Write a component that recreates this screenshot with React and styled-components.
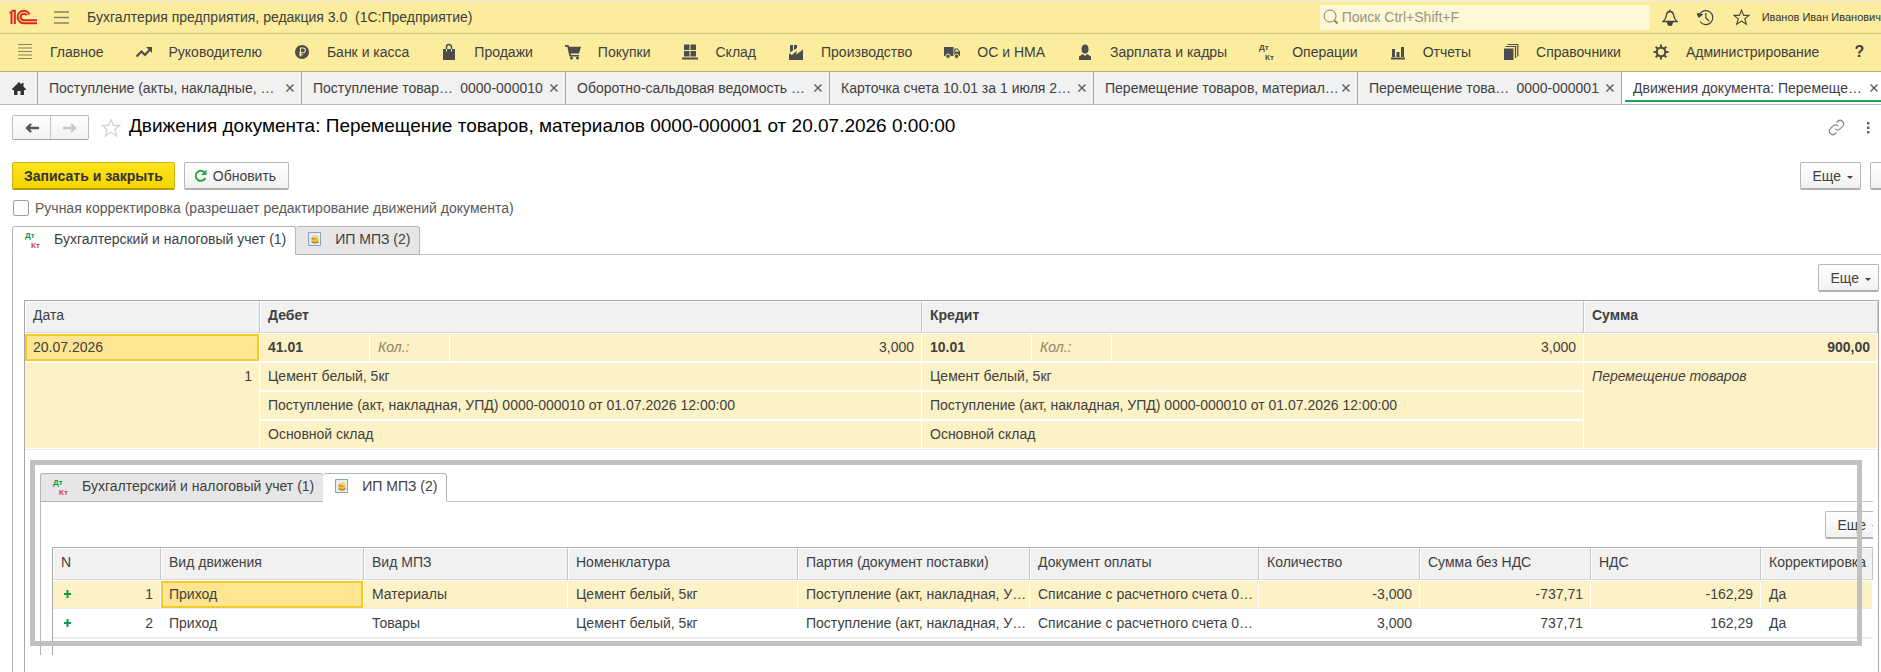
import React, { useState } from "react";
import styled, { createGlobalStyle, css } from "styled-components";

const INK = "#4d4d4d";

const sections = [
    { icon: "list", title: "Главное" },
    { icon: "trend", title: "Руководителю" },
    { icon: "ruble", title: "Банк и касса" },
    { icon: "bag", title: "Продажи" },
    { icon: "cart", title: "Покупки" },
    { icon: "store", title: "Склад" },
    { icon: "factory", title: "Производство" },
    { icon: "truck", title: "ОС и НМА" },
    { icon: "person", title: "Зарплата и кадры" },
    { icon: "dtkt", title: "Операции" },
    { icon: "bars", title: "Отчеты" },
    { icon: "books", title: "Справочники" },
    { icon: "gear", title: "Администрирование" },
];

const windows = [
    { title: "Поступление (акты, накладные, …" },
    { title: "Поступление товар…", number: "0000-000010" },
    { title: "Оборотно-сальдовая ведомость …" },
    { title: "Карточка счета 10.01 за 1 июля 2…" },
    { title: "Перемещение товаров, материал…" },
    { title: "Перемещение това…", number: "0000-000001" },
    { title: "Движения документа: Перемеще…", active: true },
];

const columns = [
    { title: "N", width: 108 },
    { title: "Вид движения", width: 203 },
    { title: "Вид МПЗ", width: 204 },
    { title: "Номенклатура", width: 230 },
    { title: "Партия (документ поставки)", width: 232 },
    { title: "Документ оплаты", width: 229 },
    { title: "Количество", width: 161 },
    { title: "Сумма без НДС", width: 171 },
    { title: "НДС", width: 170 },
    { title: "Корректировка" },
];

const stock = [
    { n: 1, kind: "Материалы", qty: "-3,000", sum: "-737,71", vat: "-162,29", current: true },
    { n: 2, kind: "Товары", qty: "3,000", sum: "737,71", vat: "162,29" },
];

const shapes = {
    list: <path d="M1 1.5h14M1 5h14M1 8.5h14M1 12h14M1 15.5h14" stroke="#8a8360" strokeWidth="1.2" />,
    trend: (
        <g>
            <path d="M0.5 13.5 5.5 8.5l3.5 3.5 4.5-5" fill="none" stroke={INK} strokeWidth="2.2" />
            <path d="M10 4h6v6z" fill={INK} />
        </g>
    ),
    ruble: (
        <g>
            <circle cx="8" cy="9" r="7" fill={INK} />
            <path d="M6.5 13.5V5h2.5a2.4 2.4 0 0 1 0 4.8H5M5 11.7h4" fill="none" stroke="#fbec9e" strokeWidth="1.1" />
        </g>
    ),
    bag: (
        <g>
            <path d="M2 6h12v11H2z" fill={INK} />
            <path d="M5.5 8V4a2.5 2.5 0 0 1 5 0v4" fill="none" stroke={INK} strokeWidth="1.5" />
            <path d="M5.5 6v2.5M10.5 6v2.5" stroke="#fbec9e" strokeWidth="1" />
        </g>
    ),
    cart: (
        <g fill={INK}>
            <path d="M0 2h3.500l.7 1.800H16l-2 6.700H5.600l.4 1.500h8V13.500H4.500L2.300 3.700H0z" />
            <circle cx="6.5" cy="15" r="1.5" />
            <circle cx="12.5" cy="15" r="1.5" />
        </g>
    ),
    store: <path d="M2 1.5h5.5V7H2zM8.5 1.5H14V7H8.500zM2 8h5.500v5.500H2zM8.500 8H14v5.500H8.500zM0 14.500h16v2H0z" fill={INK} />,
    factory: (
        <path d="M1 17V10.500l3 1.500 4.500-4v3.500L15 6.500V17zM2 2h3v5.500L2 9.500zM6 2h3v3L6 7z" fill={INK} />
    ),
    truck: (
        <g fill={INK}>
            <path d="M0 4h9.500v9H0zM10.300 5.500h3.500L16 8.800V13h-5.700z" />
            <path d="M11.500 6.500h2l1.200 2.200h-3.200z" fill="#fbec9e" />
            <circle cx="4" cy="13.200" r="2.200" stroke="#fbec9e" />
            <circle cx="12.500" cy="13.200" r="2.200" stroke="#fbec9e" />
        </g>
    ),
    person: (
        <g fill={INK}>
            <ellipse cx="8" cy="6" rx="3.500" ry="4.500" />
            <path d="M2 17v-3.500l4-2.500L8 13l2-2 4 2.500V17z" />
        </g>
    ),
    bars: <path d="M1 14.500h14v2H1zM2 6h3v8H2zM6.500 9h3v5h-3zM11 4h3v10h-3z" fill={INK} />,
    books: (
        <g>
            <path d="M1 5.500h9.500V17H1z" fill={INK} />
            <path d="M2.500 3.500h10V15M4.500 1.500h10.300v12" fill="none" stroke={INK} strokeWidth="1.200" />
        </g>
    ),
    gear: (
        <g fill="none" stroke={INK}>
            <circle cx="8" cy="9" r="4.300" strokeWidth="2.200" />
            <path
                d="M8 1.500v3M8 13.500v3M.5 9h3M12.500 9h3M2.700 3.700l2.100 2.100M11.200 12.200l2.100 2.100M2.700 14.300l2.100-2.100M11.200 5.800l2.100-2.100"
                strokeWidth="2"
            />
        </g>
    ),
};

const DtKt = ({ debit = INK, credit = INK }) => (
    <svg width="16" height="17" viewBox="0 0 16 17" overflow="visible" fontFamily="Liberation Sans, sans-serif" fontSize="8" fontWeight="700">
        <text x="0" y="7" fill={debit}>Дт</text>
        <text x="6" y="17" fill={credit}>Кт</text>
    </svg>
);

const SectionIcon = ({ name }) =>
    name === "dtkt" ? (
        <DtKt />
    ) : (
        <svg width="16" height="17" viewBox="0 0 16 17">
            {shapes[name]}
        </svg>
    );

const Coins = () => (
    <svg width="14" height="16" viewBox="0 0 14 16">
        <path d="M.5 1.5h12v13H.5z" fill="#e4edf5" stroke="#8ba3b8" />
        <ellipse cx="7" cy="10.5" rx="3.6" ry="2" fill="#c08a1c" />
        <ellipse cx="7" cy="8.8" rx="3.6" ry="2" fill="#f0c63e" />
        <ellipse cx="6" cy="7.200" rx="2.800" ry="1.500" fill="#c9952a" />
        <ellipse cx="7.500" cy="5.800" rx="3" ry="1.500" fill="#f5d661" />
    </svg>
);

const Logo = () => (
    <svg width="29" height="16" viewBox="0 0 29 16" fill="none" stroke="#d9281f" strokeWidth="2">
        <path d="M.5 3.500h2V15M2.500 1.800h3.300V15" />
        <path d="M20.500 5.500A6.200 6.200 0 1 0 14.500 14.200H28" />
        <path d="M17.800 6.300A3.300 3.300 0 1 0 14.500 11.200H28" />
    </svg>
);

const Cross = () => (
    <svg width="8" height="8" viewBox="0 0 8 8">
        <path d="M.5.5l7 7M7.500.5l-7 7" stroke="#555" strokeWidth="1.300" />
    </svg>
);

const Arrow = ({ back, color }) => (
    <svg width="14" height="12" viewBox="0 0 14 12">
        <path
            d={back ? "M14 6H2M6 2 2 6l4 4" : "M0 6h12M8 2l4 4-4 4"}
            fill="none"
            stroke={color}
            strokeWidth="2.4"
        />
    </svg>
);

const Star = ({ size, color }) => (
    <svg width={size} height={size} viewBox="0 0 20 20">
        <path
            d="M10 1.500l2.500 6h6.300l-5 4.100 1.900 6.400L10 14.200 4.300 18l1.900-6.400-5-4.100h6.300z"
            fill="none"
            stroke={color}
            strokeWidth="1.300"
        />
    </svg>
);

const MoreButton = () => (
    <Button type="button">
        Еще
        <Caret />
    </Button>
);

const FormTabs = ({ current, onSelect }) => (
    <Tabs role="tablist">
        <Tab role="tab" aria-selected={current === 0} $active={current === 0} onClick={() => onSelect(0)}>
            <DtKt debit="#12944e" credit="#d9423c" />
            Бухгалтерский и налоговый учет (1)
        </Tab>
        <Tab role="tab" aria-selected={current === 1} $active={current === 1} onClick={() => onSelect(1)}>
            <Coins />
            ИП МПЗ (2)
        </Tab>
        <TabsRest />
    </Tabs>
);

const Entries = () => (
    <Table>
        <colgroup>
            <col width="235" />
            <col width="110" />
            <col width="80" />
            <col />
            <col width="110" />
            <col width="80" />
            <col />
            <col width="294" />
        </colgroup>
        <thead>
            <tr>
                <Th>Дата</Th>
                <Th colSpan="3" $bold>Дебет</Th>
                <Th colSpan="3" $bold>Кредит</Th>
                <Th $bold>Сумма</Th>
            </tr>
        </thead>
        <tbody>
            <tr>
                <Td $filled $current>20.07.2026</Td>
                <Td $filled $bold>41.01</Td>
                <Td $filled $hint>Кол.:</Td>
                <Td $filled $right>3,000</Td>
                <Td $filled $bold>10.01</Td>
                <Td $filled $hint>Кол.:</Td>
                <Td $filled $right>3,000</Td>
                <Td $filled $bold $right>900,00</Td>
            </tr>
            <tr>
                <Td $filled $right rowSpan="3">1</Td>
                <Td $filled colSpan="3">Цемент белый, 5кг</Td>
                <Td $filled colSpan="3">Цемент белый, 5кг</Td>
                <Td $filled $italic rowSpan="3">Перемещение товаров</Td>
            </tr>
            <tr>
                <Td $filled colSpan="3">Поступление (акт, накладная, УПД) 0000-000010 от 01.07.2026 12:00:00</Td>
                <Td $filled colSpan="3">Поступление (акт, накладная, УПД) 0000-000010 от 01.07.2026 12:00:00</Td>
            </tr>
            <tr>
                <Td $filled colSpan="3">Основной склад</Td>
                <Td $filled colSpan="3">Основной склад</Td>
            </tr>
        </tbody>
    </Table>
);

const StockMoves = () => (
    <Table>
        <colgroup>
            {columns.map((column) => (
                <col key={column.title} width={column.width} />
            ))}
        </colgroup>
        <thead>
            <tr>
                {columns.map((column) => (
                    <Th key={column.title}>{column.title}</Th>
                ))}
            </tr>
        </thead>
        <tbody>
            {stock.map((row) => (
                <tr key={row.n}>
                    <Td $filled={row.current} $line>
                        <RowNumber>
                            <svg width="7" height="8" viewBox="0 0 7 8">
                                <path d="M0 4h7M3.500 0v8" stroke="#0b9a45" strokeWidth="2" />
                            </svg>
                            {row.n}
                        </RowNumber>
                    </Td>
                    <Td $filled={row.current} $current={row.current} $line>Приход</Td>
                    <Td $filled={row.current} $line>{row.kind}</Td>
                    <Td $filled={row.current} $line>Цемент белый, 5кг</Td>
                    <Td $filled={row.current} $line>Поступление (акт, накладная, У…</Td>
                    <Td $filled={row.current} $line>Списание с расчетного счета 0…</Td>
                    <Td $filled={row.current} $line $right>{row.qty}</Td>
                    <Td $filled={row.current} $line $right>{row.sum}</Td>
                    <Td $filled={row.current} $line $right>{row.vat}</Td>
                    <Td $filled={row.current} $line>Да</Td>
                </tr>
            ))}
        </tbody>
    </Table>
);

function App() {
    const [manual, setManual] = useState(false);
    const [outerTab, setOuterTab] = useState(0);
    const [innerTab, setInnerTab] = useState(1);

    return (
        <Page>
            <GlobalStyle />
            <TitleBar>
                <Logo />
                <BarButton type="button" aria-label="Меню">
                    <svg width="15" height="13" viewBox="0 0 15 13">
                        <path d="M0 1h15M0 6.500h15M0 12h15" stroke="#8a8360" strokeWidth="1.300" />
                    </svg>
                </BarButton>
                <AppName>Бухгалтерия предприятия, редакция 3.0&nbsp; (1С:Предприятие)</AppName>
                <Search>
                    <svg width="16" height="16" viewBox="0 0 16 16" fill="none" stroke="#857e62">
                        <circle cx="7" cy="7" r="6" />
                        <path d="M11.500 11.500l3 3" strokeWidth="2" />
                    </svg>
                    <input aria-label="Поиск" placeholder="Поиск Ctrl+Shift+F" />
                </Search>
                <Tools>
                    <BarButton type="button" aria-label="Оповещения">
                        <svg width="16" height="17" viewBox="0 0 16 17" fill="none" stroke="#444" strokeWidth="1.300">
                            <path d="M1 12.500c3-2 3-4 3.500-7C5 3.500 6.500 2.500 8 2.500s3 1 3.500 3c.5 3 .5 5 3.500 7z" />
                            <path d="M8 .5v2" />
                            <path d="M5.500 13.500h5L9.500 16h-3z" fill="#444" />
                        </svg>
                    </BarButton>
                    <BarButton type="button" aria-label="История">
                        <svg width="17" height="17" viewBox="0 0 17 17" fill="none" stroke="#444" strokeWidth="1.200">
                            <path d="M2.300 6A7 7 0 1 1 3 12.500M8.800 4v5l3.500 3" />
                            <path d="M0 4.500l2 3.500 3-2.500z" fill="#444" />
                        </svg>
                    </BarButton>
                    <BarButton type="button" aria-label="Избранное">
                        <Star size={17} color="#444" />
                    </BarButton>
                </Tools>
                <User>Иванов Иван Иванович</User>
            </TitleBar>
            <Sections>
                {sections.map((section) => (
                    <Section key={section.title} type="button">
                        <SectionIcon name={section.icon} />
                        {section.title}
                    </Section>
                ))}
                <Help type="button">?</Help>
                <Info />
            </Sections>
            <Windows>
                <Home type="button" aria-label="Начальная страница">
                    <svg width="14" height="13" viewBox="0 0 14 13">
                        <path d="M7 0l2.500 2.500V1h2v3.500L14 7v1h-2v5H8.500V9h-3v4H2V8H0V7z" fill="#333" />
                    </svg>
                </Home>
                {windows.map((item, index) => (
                    <WindowTab key={index} $active={item.active}>
                        <span>{item.title}</span>
                        {item.number && <span>{item.number}</span>}
                        <Close type="button" aria-label="Закрыть">
                            <Cross />
                        </Close>
                    </WindowTab>
                ))}
            </Windows>
            <Form>
                <Heading>
                    <History>
                        <button type="button" aria-label="Назад"><Arrow back color="#555" /></button>
                        <button type="button" aria-label="Вперед"><Arrow color="#c8c8c8" /></button>
                    </History>
                    <BarButton type="button" aria-label="В избранное">
                        <Star size={20} color="#d5d5d5" />
                    </BarButton>
                    <h1>Движения документа: Перемещение товаров, материалов 0000-000001 от 20.07.2026 0:00:00</h1>
                    <HeadingTools>
                        <BarButton type="button" aria-label="Ссылка">
                            <svg width="17" height="17" viewBox="0 0 24 24" fill="none" stroke="#8a8a8a" strokeWidth="1.800">
                                <path d="M10 14a5 5 0 0 0 7 0l4-4a5 5 0 0 0-7-7l-2 2" />
                                <path d="M14 10a5 5 0 0 0-7 0l-4 4a5 5 0 0 0 7 7l2-2" />
                            </svg>
                        </BarButton>
                        <BarButton type="button" aria-label="Действия">
                            <svg width="3" height="12" viewBox="0 0 3 12" fill="#666">
                                <path d="M0 0h2.500v2.500H0zM0 4.500h2.500V7H0zM0 9h2.500v2.500H0z" />
                            </svg>
                        </BarButton>
                    </HeadingTools>
                </Heading>
                <Toolbar>
                    <Button type="button" $primary>Записать и закрыть</Button>
                    <Button type="button" $icon>
                        <svg width="13" height="14" viewBox="0 0 13 14">
                            <path d="M10.500 3.500A5 5 0 1 0 11.300 9" fill="none" stroke="#2fa84a" strokeWidth="2" />
                            <path d="M12.500.5v5.500H7z" fill="#2fa84a" />
                        </svg>
                        Обновить
                    </Button>
                    <ToolbarEnd>
                        <MoreButton />
                        <HelpButton type="button" aria-label="Справка" />
                    </ToolbarEnd>
                </Toolbar>
                <Manual>
                    <input type="checkbox" checked={manual} onChange={() => setManual(!manual)} />
                    Ручная корректировка (разрешает редактирование движений документа)
                </Manual>
                <FormTabs current={outerTab} onSelect={setOuterTab} />
                <Panel>
                    <Commands>
                        <MoreButton />
                    </Commands>
                    <Sheet>
                        <Entries />
                        <Inset>
                            <InsetContent>
                                <FormTabs current={innerTab} onSelect={setInnerTab} />
                                <InsetPanel>
                                    <InsetCommands>
                                        <MoreButton />
                                    </InsetCommands>
                                    <InsetSheet>
                                        <StockMoves />
                                    </InsetSheet>
                                </InsetPanel>
                            </InsetContent>
                            <Frame />
                        </Inset>
                    </Sheet>
                </Panel>
            </Form>
        </Page>
    );
}

export default App;

const GlobalStyle = createGlobalStyle`
    * {
        box-sizing: border-box;
    }

    body {
        margin: 0;
        background: #fff;
        color: #404040;
        font: 14px/16px "Liberation Sans", Arial, sans-serif;
    }

    button, input {
        color: inherit;
        font: inherit;
    }

    svg {
        display: block;
        flex: none;
    }
`;

const Page = styled.div`
    display: flex;
    flex-direction: column;
    min-height: 100vh;
    overflow: hidden;
    white-space: nowrap;
`;

const TitleBar = styled.header`
    display: flex;
    align-items: center;
    height: 34px;
    padding-left: 9px;
    background: #fbec9e;
    border-top: 1px solid #ececec;
    border-bottom: 1px solid #cfc382;
`;

const BarButton = styled.button`
    display: flex;
    padding: 0;
    border: 0;
    background: none;

    ${TitleBar} > & {
        margin: 0 18px 0 16px;
    }
`;

const AppName = styled.div`
    flex: 1;
`;

const Search = styled.label`
    display: flex;
    align-items: center;
    gap: 3px;
    width: 330px;
    height: 25px;
    padding-left: 3px;
    background: #fef7d5;

    input {
        flex: 1;
        padding: 0;
        border: 0;
        outline: 0;
        background: none;
    }

    input::placeholder {
        color: #9b967f;
    }
`;

const Tools = styled.div`
    display: flex;
    align-items: center;
    gap: 19px;
    padding: 0 12px;
`;

const User = styled.div`
    color: #333;
    font-size: 11px;
`;

const Sections = styled.nav`
    display: flex;
    align-items: center;
    gap: 32px;
    height: 38px;
    padding: 0 0 2px 17px;
    background: #fbec9e;
    border-bottom: 1px solid #b9b078;
`;

const Section = styled.button`
    display: flex;
    flex: none;
    align-items: center;
    gap: 17px;
    padding: 0;
    border: 0;
    background: none;
`;

const Help = styled.button`
    flex: none;
    width: 16px;
    padding: 0;
    border: 0;
    background: none;
    font-size: 16px;
    font-weight: bold;
`;

const Info = styled.span`
    flex: none;
    width: 16px;
    height: 10px;
    margin-left: -18px;
    background: #f29a3c;
`;

const Windows = styled.div`
    display: flex;
    height: 33px;
    background: #f1f1f1;
    border-bottom: 1px solid #bdbdbd;
`;

const Home = styled.button`
    display: flex;
    flex: none;
    align-items: center;
    justify-content: center;
    width: 37px;
    padding: 0;
    border: 0;
    background: none;
`;

const WindowTab = styled.div`
    display: flex;
    flex: 0 0 264px;
    align-items: center;
    justify-content: space-between;
    padding: 0 7px 0 11px;
    border-left: 1px solid #a5a5a5;

    ${(props) =>
        props.$active &&
        css`
            background: linear-gradient(#1c9f57, #1c9f57) 3px 28px / 100% 2px no-repeat #fff;
        `}
`;

const Close = styled.button`
    display: flex;
    padding: 0;
    border: 0;
    background: none;
`;

const Form = styled.main`
    display: flex;
    flex: 1;
    flex-direction: column;
    padding: 10px 0 0 12px;
`;

const Heading = styled.div`
    display: flex;
    align-items: center;
    gap: 12px;

    h1 {
        margin: 0 0 0 -4px;
        padding-bottom: 3px;
        color: #000;
        font-size: 19px;
        font-weight: normal;
        line-height: 22px;
    }
`;

const History = styled.div`
    display: flex;
    width: 77px;
    height: 25px;
    border: 1px solid #bdbdbd;
    border-bottom-color: #a5a5a5;
    border-radius: 2px;
    background: linear-gradient(#fff, #f2f2f2);

    button {
        display: flex;
        flex: 1;
        align-items: center;
        justify-content: center;
        padding: 0;
        border: 0;
        background: none;
    }

    button + button {
        border-left: 1px solid #c4c4c4;
    }
`;

const HeadingTools = styled.div`
    display: flex;
    align-items: center;
    gap: 22px;
    margin-left: auto;
    padding-right: 11px;
`;

const Toolbar = styled.div`
    display: flex;
    gap: 9px;
    margin-top: 22px;
`;

const ToolbarEnd = styled.div`
    display: flex;
    gap: 9px;
    margin: 0 -21px 0 auto;
`;

const Button = styled.button`
    display: flex;
    flex: none;
    align-items: center;
    gap: 6px;
    height: 28px;
    padding: ${(props) => (props.$icon ? "0 12px 0 9px" : "0 7px 0 12px")};
    border: 1px solid #b8b8b8;
    border-bottom: 2px solid #b0b0b0;
    border-radius: 2px;
    background: linear-gradient(#fff, #f1f1f1);

    ${(props) =>
        props.$primary &&
        css`
            padding: 0 11px;
            border-color: #cdb21c;
            border-bottom-color: #b89c00;
            background: linear-gradient(#ffe41c, #f4d500);
            color: #333;
            font-weight: bold;
        `}
`;

const HelpButton = styled(Button)`
    width: 32px;
    padding: 0;
`;

const Caret = styled.span`
    margin-top: 4px;
    border: 3px solid transparent;
    border-top-color: #444;
    border-bottom: 0;
`;

const Manual = styled.label`
    display: flex;
    align-items: center;
    gap: 6px;
    align-self: flex-start;
    margin: 10px 0;
    padding-left: 1px;
    color: #595959;

    input {
        appearance: none;
        width: 16px;
        height: 16px;
        margin: 0;
        border: 1px solid #a0a0a0;
        border-radius: 2px;
        background: #fff;
    }

    input:checked {
        background: #2fa84a;
    }
`;

const Tabs = styled.div`
    display: flex;
    height: 29px;
`;

const Tab = styled.button`
    display: flex;
    flex: none;
    align-items: center;
    gap: 13px;
    padding: 0 9px 3px 12px;
    border: 1px solid #b5b5b5;
    border-bottom-color: ${(props) => (props.$active ? "#fff" : "#b5b5b5")};
    border-radius: 3px 3px 0 0;
    background: ${(props) => (props.$active ? "#fff" : "#e6e6e6")};

    & + & {
        border-left-width: ${(props) => (props.$active ? "1px" : "0")};
    }

    &[aria-selected="false"]:first-child {
        border-right: 0;
    }
`;

const TabsRest = styled.div`
    flex: 1;
    border-bottom: 1px solid #c6c6c6;
`;

const Panel = styled.div`
    display: flex;
    flex: 1;
    flex-direction: column;
    padding: 9px 2px 0 11px;
    border-left: 1px solid #b5b5b5;
`;

const Commands = styled.div`
    display: flex;
    justify-content: flex-end;
    margin-bottom: 8px;
`;

const Sheet = styled.div`
    flex: 1;
    border: 1px solid #a9a9a9;
    border-bottom: 0;
`;

const Table = styled.table`
    width: 100%;
    table-layout: fixed;
    border-spacing: 0;
    border-bottom: 1px solid #ececec;
`;

const Th = styled.th`
    height: 32px;
    padding: 0 7px 4px;
    border: 1px solid #fff;
    border-right-color: #c4c4c4;
    border-bottom-color: #d9d9d9;
    background: #f1f1f1;
    font-weight: ${(props) => (props.$bold ? "bold" : "normal")};
    text-align: left;
`;

const Td = styled.td`
    height: 29px;
    padding: 5px 7px 6px;
    border-top: 1px solid #fff;
    border-right: 1px solid #fff;
    border-bottom: 1px solid ${(props) => (props.$line ? "#ececec" : "#fff")};
    background: ${(props) => (props.$filled ? "#fdf2c6" : "#fff")};
    background-clip: padding-box;
    vertical-align: top;
    overflow: hidden;
    text-align: ${(props) => (props.$right ? "right" : "left")};
    font-weight: ${(props) => (props.$bold ? "bold" : "normal")};
    font-style: ${(props) => (props.$hint || props.$italic ? "italic" : "normal")};
    color: ${(props) => (props.$hint ? "#8b8469" : "inherit")};
    padding-left: 8px;

    ${(props) =>
        props.$current &&
        css`
            background-color: #fee591;
            box-shadow: inset 0 0 0 2px #f8ca28;
        `}
`;

const RowNumber = styled.div`
    display: flex;
    align-items: center;
    justify-content: space-between;
    padding-left: 3px;
`;

// block that is laid over the entries sheet
const Inset = styled.div`
    position: relative;
    margin: 23px 5px 0 15px;
`;

const InsetContent = styled.div`
    overflow: hidden;
`;

const InsetPanel = styled.div`
    padding: 9px 0 0 11px;
    border-left: 1px solid #b5b5b5;
`;

const InsetCommands = styled(Commands)`
    margin-right: -13px;
`;

const InsetSheet = styled.div`
    padding-bottom: 16px;
    border-top: 1px solid #b5b5b5;
    border-left: 1px solid #a9a9a9;
`;

const Frame = styled.div`
    position: absolute;
    inset: -13px 11px 9px -10px;
    border: 5px solid #c1c1c1;
    pointer-events: none;
`;
